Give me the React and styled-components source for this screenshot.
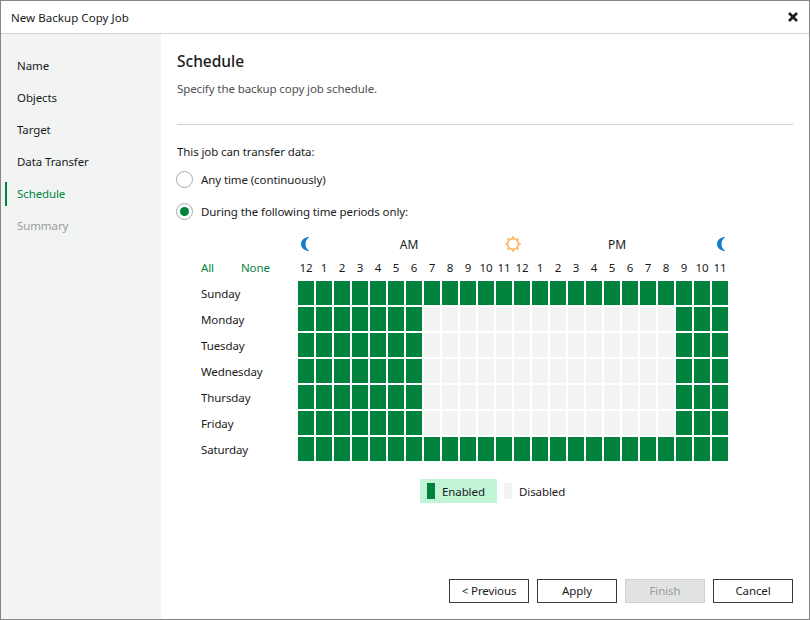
import React from "react";
import styled, { createGlobalStyle } from "styled-components";

const FONT = `"Noto Sans", "Open Sans", sans-serif`;
const GREEN = "#00843d";
const navItems = ["Name", "Objects", "Target", "Data Transfer", "Schedule", "Summary"];
const hours = [12, 1, 2, 3, 4, 5, 6, 7, 8, 9, 10, 11, 12, 1, 2, 3, 4, 5, 6, 7, 8, 9, 10, 11];
const days = ["Sunday", "Monday", "Tuesday", "Wednesday", "Thursday", "Friday", "Saturday"];

const isEnabled = (day, hour) => {
  if (day === 0 || day === 6) return true;
  return hour < 7 || hour > 20;
};

const Moon = () => (
  <svg width="12" height="16" viewBox="0 0 12 16">
    <path d="M10.500 1C6.500 1 2 3.600 2 8s4.500 7 8.500 7C8 13.500 6.500 11 6.500 8S8 2.500 10.500 1z" fill="#0f7fd0" />
  </svg>
);

const Sun = () => (
  <svg width="18" height="18" viewBox="0 0 18 18">
    <circle cx="9" cy="9" r="5.500" fill="none" stroke="#fbb76b" strokeWidth="1.800" />
    <path
      d="M9 1v2M9 15v2M1 9h2M15 9h2M3.300 3.300l1.400 1.400M13.300 13.300l1.400 1.400M14.700 3.300l-1.400 1.400M4.700 13.300l-1.400 1.400"
      stroke="#fbb76b"
      strokeWidth="1.600"
    />
  </svg>
);

const App = () => {
  return (
    <Window>
      <GlobalStyle />
      <TitleBar>
        <TitleText>New Backup Copy Job</TitleText>
        <svg width="10" height="10" viewBox="0 0 10 10">
          <path d="M1 1l8 8M9 1l-8 8" stroke="#1c1c1c" strokeWidth="2.600" />
        </svg>
      </TitleBar>
      <Body>
        <Sidebar>
          {navItems.map((item) => (
            <NavItem key={item} $active={item === "Schedule"} $muted={item === "Summary"}>
              {item}
            </NavItem>
          ))}
        </Sidebar>
        <Main>
          <Heading>Schedule</Heading>
          <Intro>Specify the backup copy job schedule.</Intro>
          <Divider />
          <Label>This job can transfer data:</Label>
          <RadioRow>
            <Radio />
            Any time (continuously)
          </RadioRow>
          <RadioRow>
            <Radio $checked />
            During the following time periods only:
          </RadioRow>
          <Scheduler>
            <PeriodRow>
              <PeriodItem><Moon /></PeriodItem>
              <PeriodItem>AM</PeriodItem>
              <PeriodItem><Sun /></PeriodItem>
              <PeriodItem>PM</PeriodItem>
              <PeriodItem><Moon /></PeriodItem>
            </PeriodRow>
            <HourRow>
              <Links>
                <LinkText>All</LinkText>
                <LinkText>None</LinkText>
              </Links>
              <Cells>
                {hours.map((h, i) => (
                  <Hour key={i}>{h}</Hour>
                ))}
              </Cells>
            </HourRow>
            {days.map((day, d) => (
              <DayRow key={day}>
                <DayName>{day}</DayName>
                <Cells>
                  {hours.map((_, h) => (
                    <Cell key={h} $on={isEnabled(d, h)} />
                  ))}
                </Cells>
              </DayRow>
            ))}
          </Scheduler>
          <Legend>
            <LegendItem $selected>
              <Swatch $on />
              Enabled
            </LegendItem>
            <LegendItem>
              <Swatch />
              Disabled
            </LegendItem>
          </Legend>
          <Footer>
            <Button>&lt; Previous</Button>
            <Button>Apply</Button>
            <Button disabled>Finish</Button>
            <Button>Cancel</Button>
          </Footer>
        </Main>
      </Body>
    </Window>
  );
};

export default App;

const GlobalStyle = createGlobalStyle`
  html, body {
    margin: 0;
    padding: 0;
    background: #fff;
  }
  * {
    box-sizing: border-box;
  }
`;

const Window = styled.div`
  width: 810px;
  height: 620px;
  border: 1px solid #868686;
  display: flex;
  flex-direction: column;
  background: #fff;
  color: #1a1a1a;
  font-family: ${FONT};
  font-size: 11.5px;
  letter-spacing: -0.1px;
  overflow: hidden;
`;

const TitleBar = styled.div`
  height: 33px;
  flex: none;
  display: flex;
  align-items: center;
  justify-content: space-between;
  padding: 0 11px 0 10px;
  border-bottom: 1px solid #d0d2d2;
`;

const TitleText = styled.span`
  font-size: 11.5px;
  letter-spacing: 0.05px;
`;

const Body = styled.div`
  flex: 1;
  display: flex;
  min-height: 0;
`;

const Sidebar = styled.div`
  width: 160px;
  flex: none;
  padding: 15px 0 0 4px;
  background: #f2f4f4;
`;

const NavItem = styled.div`
  height: 32px;
  display: flex;
  align-items: center;
  padding-left: 12px;
  position: relative;
  color: ${(p) => (p.$active ? GREEN : p.$muted ? "#9a9c9c" : "#1a1a1a")};

  &::before {
    content: "";
    display: ${(p) => (p.$active ? "block" : "none")};
    position: absolute;
    left: 0;
    top: 5px;
    width: 2px;
    height: 24px;
    background: ${GREEN};
  }
`;

const Main = styled.div`
  flex: 1;
  display: flex;
  flex-direction: column;
  padding: 16px 16px 16px 16px;
`;

const Heading = styled.div`
  font-size: 15.5px;
  font-weight: 500;
  letter-spacing: 0;
  line-height: 22px;
`;

const Intro = styled.div`
  margin-top: 8px;
  line-height: 18px;
  color: #505050;
`;

const Divider = styled.div`
  height: 1px;
  margin-top: 26px;
  background: #d0d2d2;
`;

const Label = styled.div`
  margin-top: 19px;
  margin-bottom: 3px;
  line-height: 16px;
`;

const RadioRow = styled.div`
  height: 32px;
  display: flex;
  align-items: center;
  gap: 8px;
`;

const Radio = styled.span`
  width: 17px;
  height: 17px;
  margin-left: -1px;
  border-radius: 50%;
  border: 1px solid #a8aaaa;
  display: flex;
  align-items: center;
  justify-content: center;

  &::after {
    content: "";
    display: ${(p) => (p.$checked ? "block" : "none")};
    width: 9px;
    height: 9px;
    border-radius: 50%;
    background: ${GREEN};
  }
`;

const Scheduler = styled.div`
  margin-top: 7px;
  display: flex;
  flex-direction: column;
`;

const PeriodRow = styled.div`
  height: 20px;
  margin-left: 117px;
  width: 438px;
  display: flex;
  justify-content: space-between;
`;

const PeriodItem = styled.div`
  width: 22px;
  display: flex;
  align-items: center;
  justify-content: center;
  white-space: nowrap;
  font-size: 12px;
`;

const HourRow = styled.div`
  display: flex;
  height: 27px;
  align-items: center;
  padding-left: 24px;
`;

const Links = styled.div`
  width: 97px;
  flex: none;
  display: flex;
  gap: 27px;
`;

const LinkText = styled.span`
  color: ${GREEN};
`;

const Cells = styled.div`
  display: flex;
  gap: 2px;
`;

const Hour = styled.span`
  width: 16px;
  text-align: center;
  white-space: nowrap;
  display: flex;
  justify-content: center;
`;

const DayRow = styled.div`
  display: flex;
  align-items: center;
  padding-left: 24px;
  margin-bottom: 2px;
`;

const DayName = styled.div`
  width: 97px;
  flex: none;
`;

const Cell = styled.div`
  width: 16px;
  height: 24px;
  background: ${(p) => (p.$on ? GREEN : "#f2f4f4")};
`;

const Legend = styled.div`
  margin-top: 16px;
  margin-left: 243px;
  display: flex;
`;

const LegendItem = styled.div`
  height: 24px;
  display: flex;
  align-items: center;
  gap: 7px;
  padding: 0 7px;
  width: ${(p) => (p.$selected ? "77px" : "auto")};
  background: ${(p) => (p.$selected ? "#c1f5d5" : "transparent")};
`;

const Swatch = styled.span`
  width: 8px;
  height: 16px;
  background: ${(p) => (p.$on ? GREEN : "#f2f4f4")};
`;

const Footer = styled.div`
  margin-top: auto;
  display: flex;
  justify-content: flex-end;
  gap: 8px;
`;

const Button = styled.button`
  width: 80px;
  height: 24px;
  padding: 0 0 2px;
  background: ${(p) => (p.disabled ? "#e1e3e3" : "#fff")};
  border: 1px solid ${(p) => (p.disabled ? "#cfd1d1" : "#3a3a3a")};
  color: ${(p) => (p.disabled ? "#9a9c9c" : "#1a1a1a")};
  font-family: ${FONT};
  font-size: 11.5px;
  letter-spacing: -0.1px;
`;
